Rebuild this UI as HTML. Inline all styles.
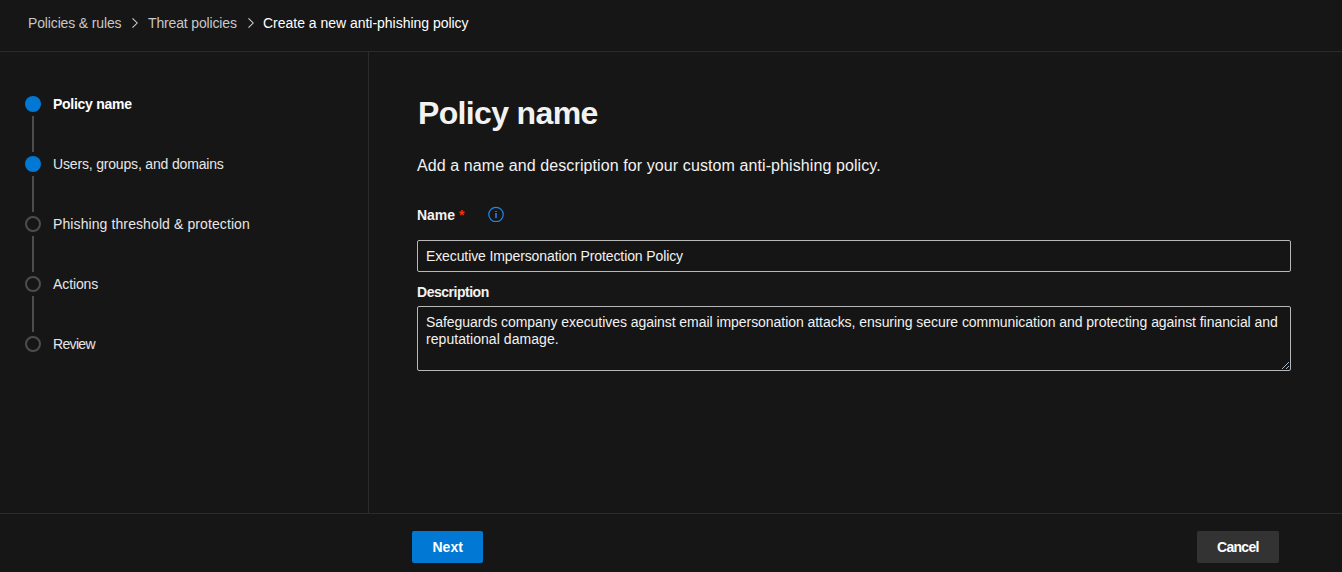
<!DOCTYPE html>
<html>
<head>
<meta charset="utf-8">
<style>
html,body{margin:0;padding:0;width:1342px;height:572px;overflow:hidden;background:#161616;}
body{position:relative;font-family:"Liberation Sans",sans-serif;color:#ffffff;}
.a{position:absolute;white-space:nowrap;}
.hl{position:absolute;left:0;width:1342px;height:1px;background:#2b2b2b;}
.vl{position:absolute;width:1px;background:#2b2b2b;}
.bc{font-size:14px;line-height:20px;color:#c8c8c8;}
.chev{position:absolute;}
.step{font-size:14px;line-height:20px;color:#e6e6e6;left:53px;}
.dot{position:absolute;left:25px;width:16px;height:16px;border-radius:50%;box-sizing:border-box;}
.dot.on{background:#0078d4;}
.dot.off{border:2px solid #4d4d4d;}
.sl{position:absolute;left:32px;width:2px;height:36px;background:#4d4d4d;}
.box{position:absolute;left:417px;width:874px;box-sizing:border-box;border:1px solid #b8b8b8;border-radius:2px;background:#151515;}
.btn{position:absolute;top:531px;height:32px;border-radius:2px;}
</style>
</head>
<body>
<!-- breadcrumb -->
<div class="a bc" style="left:28px;top:13px;letter-spacing:-0.14px;">Policies &amp; rules</div>
<svg class="chev" style="left:131px;top:17px" width="8" height="12" viewBox="0 0 8 12"><path d="M1.5 1.3 L6.2 6 L1.5 10.7" fill="none" stroke="#d4d4d4" stroke-width="1.05"/></svg>
<div class="a bc" style="left:148px;top:13px;letter-spacing:-0.15px;">Threat policies</div>
<svg class="chev" style="left:247px;top:17px" width="8" height="12" viewBox="0 0 8 12"><path d="M1.5 1.3 L6.2 6 L1.5 10.7" fill="none" stroke="#d4d4d4" stroke-width="1.05"/></svg>
<div class="a bc" style="left:263px;top:13px;color:#ffffff;letter-spacing:-0.02px;">Create a new anti-phishing policy</div>

<div class="hl" style="top:51px"></div>
<div class="hl" style="top:513px"></div>
<div class="vl" style="left:368px;top:52px;height:461px"></div>

<!-- stepper -->
<div class="dot on" style="top:96px"></div>
<div class="sl" style="top:116px"></div>
<div class="dot on" style="top:156px"></div>
<div class="sl" style="top:176px"></div>
<div class="dot off" style="top:216px"></div>
<div class="sl" style="top:236px"></div>
<div class="dot off" style="top:276px"></div>
<div class="sl" style="top:296px"></div>
<div class="dot off" style="top:336px"></div>

<div class="a step" style="top:94px;font-weight:700;color:#ffffff;letter-spacing:-0.27px;">Policy name</div>
<div class="a step" style="top:154px;letter-spacing:-0.17px;">Users, groups, and domains</div>
<div class="a step" style="top:214px;letter-spacing:0.1px;">Phishing threshold &amp; protection</div>
<div class="a step" style="top:274px;letter-spacing:-0.1px;">Actions</div>
<div class="a step" style="top:334px;letter-spacing:-0.66px;">Review</div>

<!-- content -->
<div class="a" style="left:418px;top:93px;font-size:32px;line-height:40px;font-weight:700;color:#f2f2f2;letter-spacing:-0.65px;">Policy name</div>
<div class="a" style="left:417px;top:155px;font-size:16px;line-height:22px;color:#f2f2f2;letter-spacing:0.095px;">Add a name and description for your custom anti-phishing policy.</div>

<div class="a" style="left:417px;top:205px;font-size:14px;line-height:20px;font-weight:700;color:#f2f2f2;letter-spacing:-0.05px;">Name</div>
<div class="a" style="left:459px;top:205px;font-size:14px;line-height:20px;font-weight:700;color:#f5300c;">*</div>
<svg class="a" style="left:488px;top:206px" width="16" height="16" viewBox="0 0 16 16"><circle cx="8" cy="8.5" r="7.2" fill="none" stroke="#1a8cf0" stroke-width="1.2"/><rect x="7" y="5" width="2" height="1" fill="#2466d0"/><rect x="7" y="7" width="2" height="5" fill="#2466d0"/></svg>

<div class="box" style="top:240px;height:32px;"></div>
<div class="a" style="left:426px;top:246px;font-size:14px;line-height:20px;color:#f2f2f2;letter-spacing:-0.11px;">Executive Impersonation Protection Policy</div>

<div class="a" style="left:417px;top:282px;font-size:14px;line-height:20px;font-weight:700;color:#f2f2f2;letter-spacing:-0.48px;">Description</div>
<div class="box" style="top:306px;height:65px;"></div>
<div class="a" style="left:426px;top:314px;font-size:14px;line-height:17px;color:#f2f2f2;letter-spacing:-0.05px;">Safeguards company executives against email impersonation attacks, ensuring secure communication and protecting against financial and</div>
<div class="a" style="left:426px;top:331px;font-size:14px;line-height:17px;color:#f2f2f2;letter-spacing:0.06px;">reputational damage.</div>
<svg class="a" style="left:1281px;top:361px" width="9" height="9" viewBox="0 0 9 9"><path d="M1 8 L8 1 M5 8 L8 5" stroke="#a9b9c9" stroke-width="1"/></svg>

<!-- footer -->
<div class="btn" style="left:412px;width:71px;background:#0078d4;"></div>
<div class="a" style="left:432.5px;top:537px;font-size:14px;line-height:20px;font-weight:700;color:#ffffff;letter-spacing:0px;">Next</div>
<div class="btn" style="left:1197px;width:82px;background:#333333;"></div>
<div class="a" style="left:1217px;top:537px;font-size:14px;line-height:20px;font-weight:700;color:#ffffff;letter-spacing:-0.7px;">Cancel</div>
</body>
</html>
